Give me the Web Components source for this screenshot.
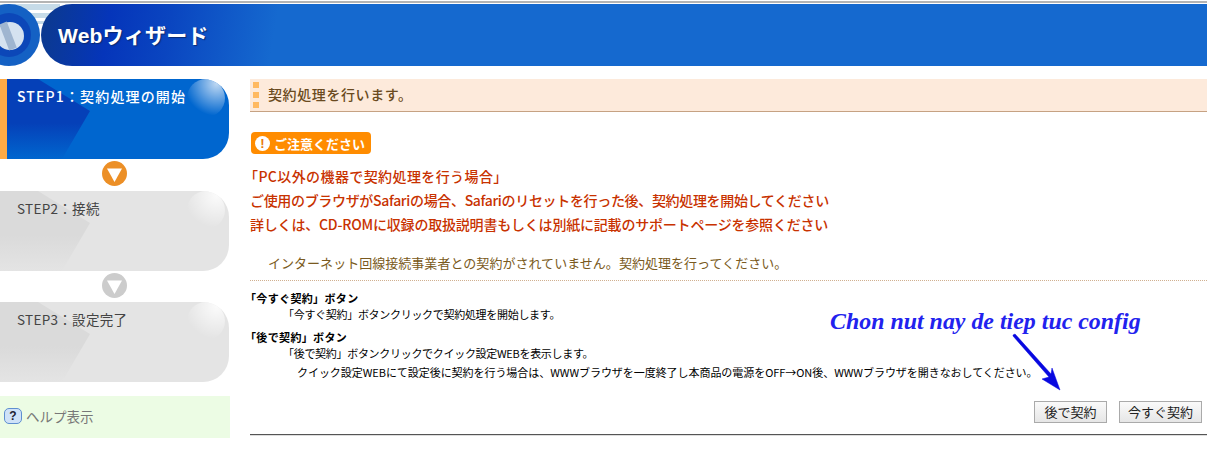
<!DOCTYPE html>
<html lang="ja">
<head>
<meta charset="utf-8">
<title>Webウィザード</title>
<style>
  html, body { margin: 0; padding: 0; background: #fff; }
  body { font-family: "Noto Sans CJK JP", "Liberation Sans", sans-serif; width: 1207px; height: 456px; overflow: hidden; position: relative; }
</style>
</head>
<body>
<wizard-page>
  <wizard-header slot="header">Webウィザード</wizard-header>
  <wizard-step slot="side" state="on">STEP1：契約処理の開始</wizard-step>
  <step-arrow slot="side" color="#ec8f26" size="32"></step-arrow>
  <wizard-step slot="side">STEP2：接続</wizard-step>
  <step-arrow slot="side" color="#cccccc" size="31"></step-arrow>
  <wizard-step slot="side">STEP3：設定完了</wizard-step>
  <help-link slot="side">ヘルプ表示</help-link>

  <title-bar>契約処理を行います。</title-bar>
  <notice-badge>ご注意ください</notice-badge>
  <warn-text>
    <p class="first">「PC以外の機器で契約処理を行う場合」</p>
    <p class="second">ご使用のブラウザがSafariの場合、Safariのリセットを行った後、契約処理を開始してください</p>
    <p class="third">詳しくは、CD-ROMに収録の取扱説明書もしくは別紙に記載のサポートページを参照ください</p>
  </warn-text>
  <status-line>インターネット回線接続事業者との契約がされていません。契約処理を行ってください。</status-line>
  <help-item heading="「今すぐ契約」ボタン" style="margin-top:9px">
    <div>「今すぐ契約」ボタンクリックで契約処理を開始します。</div>
  </help-item>
  <help-item heading="「後で契約」ボタン">
    <div>「後で契約」ボタンクリックでクイック設定WEBを表示します。</div>
    <div class="more">クイック設定WEBにて設定後に契約を行う場合は、WWWブラウザを一度終了し本商品の電源をOFF→ON後、WWWブラウザを開きなおしてください。</div>
  </help-item>
  <button-row>
    <wizard-button width="73">後で契約</wizard-button>
    <wizard-button width="83">今すぐ契約</wizard-button>
  </button-row>
</wizard-page>
<note-overlay>Chon nut nay de tiep tuc config</note-overlay>

<script>
class WizardPage extends HTMLElement {
  constructor() {
    super();
    this.attachShadow({mode: "open"}).innerHTML = `
      <style>
        :host { display: block; }
        .top { box-sizing: border-box; border-top: 2px solid #b4b4b4; margin-top: 1px; height: 3px; }
        .cols { display: flex; padding-top: 13px; }
        .side { width: 230px; flex: none; display: flex; flex-direction: column; }
        .main { margin-left: 20px; flex: 1; min-width: 0; }
      </style>
      <div class="top"></div>
      <slot name="header"></slot>
      <div class="cols">
        <div class="side"><slot name="side"></slot></div>
        <div class="main"><slot></slot></div>
      </div>`;
  }
}

class WizardHeader extends HTMLElement {
  constructor() {
    super();
    this.attachShadow({mode: "open"}).innerHTML = `
      <style>
        :host { display: block; height: 62px; position: relative; background: #fff; overflow: hidden; }
        .bar { position: absolute; left: 41px; right: 0; top: 0; bottom: 0; border-radius: 31px 0 0 31px;
               background: linear-gradient(100deg, #0c3a8c 0, #0535ba 70px, #0a45c0 130px, #1569cf 235px);
               display: flex; align-items: center; padding-left: 17px; box-sizing: border-box;
               color: #fff; font: bold 21px "Liberation Sans", "Noto Sans CJK JP", sans-serif; letter-spacing: .2px; text-shadow: 1px 1px 1px #0a2a70; }
        svg { position: absolute; left: 0; top: 0; }
        span { position: relative; top: -1px; }
      </style>
      <svg width="60" height="62" viewBox="0 0 60 62">
        <rect x="0" y="0" width="60" height="20" fill="#c6dbe8"/>
        <rect x="0" y="6" width="60" height="3" fill="#fff"/>
        <rect x="0" y="14" width="60" height="3" fill="#fff"/>
        <circle cx="9" cy="31" r="31" fill="#1461c4"/>
        <circle cx="9" cy="31" r="22" fill="#0c47b8"/>
        <circle cx="10" cy="32" r="14" fill="#d5e2f0"/>
        <path d="M3 19 L13 45" stroke="#9fb5d0" stroke-width="8" fill="none"/>
      </svg>
      <div class="bar"><span><slot></slot></span></div>`;
  }
}

class WizardStep extends HTMLElement {
  constructor() {
    super();
    const on = this.getAttribute("state") === "on";
    this.attachShadow({mode: "open"}).innerHTML = `
      <style>
        :host { display: block; width: 229px; height: 80px; position: relative; overflow: hidden; box-sizing: border-box;
                border-radius: 0 26px 26px 0; background: ${on ? "#0066cf" : "#e4e4e4"};
                ${on ? "border-left: 7px solid #ffab45;" : ""} color: ${on ? "#fff" : "#444"}; }
        svg { position: absolute; left: 0; top: 0; }
        .t { position: relative; white-space: nowrap; line-height: 20px;
             ${on ? "padding: 7px 0 0 10px; font-size: 14px; letter-spacing: 1.15px; font-weight: 500;"
                  : "padding: 7px 0 0 17px; font-size: 13.5px; letter-spacing: .3px;"} }
      </style>
      <svg width="230" height="80" viewBox="0 0 230 80">
        <defs>
          <linearGradient id="g" x1="0" y1="0" x2="0" y2="1">
            <stop offset="0" stop-color="${on ? "#0540b8" : "#dadada"}"/>
            <stop offset=".55" stop-color="${on ? "#0540b8" : "#dadada"}"/>
            <stop offset="1" stop-color="${on ? "#0066cf" : "#e4e4e4"}"/>
          </linearGradient>
          <radialGradient id="s" cx=".78" cy=".12" r=".85">
            <stop offset="0" stop-color="#fff" stop-opacity="${on ? .75 : .85}"/>
            <stop offset="1" stop-color="#fff" stop-opacity="0"/>
          </radialGradient>
        </defs>
        <path d="M0 0 H${on ? 31 : 38} L${on ? 83 : 90} 32 L${on ? 55 : 62} 80 H0Z" fill="url(#g)"/>
        <circle cx="${on ? 199 : 206}" cy="19" r="19" fill="url(#s)"/>
      </svg>
      <div class="t"><slot></slot></div>`;
  }
}

class StepArrow extends HTMLElement {
  constructor() {
    super();
    const c = this.getAttribute("color");
    this.attachShadow({mode: "open"}).innerHTML = `
      <style>
        :host { display: flex; justify-content: center; height: ${this.getAttribute("size")}px; align-items: center; width: 229px; }
        svg { margin-top: -3px; }
      </style>
      <svg width="25" height="25" viewBox="0 0 25 25">
        <circle cx="12.5" cy="12.5" r="12.5" fill="${c}"/>
        <path d="M5 7.5 H20 L12.5 21Z" fill="#fff"/>
      </svg>`;
  }
}

class HelpLink extends HTMLElement {
  constructor() {
    super();
    this.attachShadow({mode: "open"}).innerHTML = `
      <style>
        :host { display: flex; align-items: center; gap: 4px; height: 42px; box-sizing: border-box; padding: 0 0 3px 4px; margin-top: 14px;
                background: #ecfce4; color: #777; font-size: 13.5px; }
        .q { width: 18px; height: 16px; box-sizing: border-box; border: 1px solid #5f8fd0; border-radius: 5px; background: #cfe2f8;
             color: #223; font: bold 12px/14px "Liberation Sans", sans-serif; text-align: center; }
      </style>
      <span class="q">?</span><slot></slot>`;
  }
}

class TitleBar extends HTMLElement {
  constructor() {
    super();
    this.attachShadow({mode: "open"}).innerHTML = `
      <style>
        :host { display: flex; align-items: center; height: 33px; box-sizing: border-box; padding: 0 0 2px 18px; background: #fdeadb; border-bottom: 1px solid #c6a283;
                color: #6a4a20; font-size: 14px; font-weight: 500; letter-spacing: .6px; position: relative; }
        i { position: absolute; left: 3px; top: 3px; bottom: 0; width: 6px;
            background: repeating-linear-gradient(#ffb960 0 6px, transparent 6px 10px); }
      </style>
      <i></i><slot></slot>`;
  }
}

class NoticeBadge extends HTMLElement {
  constructor() {
    super();
    this.attachShadow({mode: "open"}).innerHTML = `
      <style>
        :host { display: flex; align-items: center; gap: 4px; width: 120px; height: 22px; box-sizing: border-box; margin: 20px 0 0 1px; padding-left: 4px;
                background: #ff8c00; border-radius: 4px; color: #fff; font-size: 13px; font-weight: bold; white-space: nowrap; }
        b { width: 15px; height: 15px; border-radius: 50%; background: #fff; color: #e8790a; font: bold 13px/15px "Liberation Sans", sans-serif; text-align: center; flex: none; }
      </style>
      <b>!</b><slot></slot>`;
  }
}

class WarnText extends HTMLElement {
  constructor() {
    super();
    this.attachShadow({mode: "open"}).innerHTML = `
      <style>
        :host { display: block; margin-top: 10px; color: #c83200; font-size: 14px; font-weight: 500; line-height: 24px; white-space: nowrap; }
        ::slotted(p) { margin: 0; }
        ::slotted(.first) { margin-left: -6px; letter-spacing: .4px; }
        ::slotted(.second) { letter-spacing: -.33px; }
        ::slotted(.third) { letter-spacing: -.2px; }
      </style>
      <slot></slot>`;
  }
}

class StatusLine extends HTMLElement {
  constructor() {
    super();
    this.attachShadow({mode: "open"}).innerHTML = `
      <style>
        :host { display: block; margin-top: 6px; height: 39px; box-sizing: border-box; padding: 11px 0 0 18px; border-bottom: 1px dotted #d0b090;
                color: #7a5a20; font-size: 13px; letter-spacing: .03px; line-height: 19px; white-space: nowrap; }
      </style>
      <slot></slot>`;
  }
}

class HelpItem extends HTMLElement {
  constructor() {
    super();
    this.attachShadow({mode: "open"}).innerHTML = `
      <style>
        :host { display: block; font-size: 11px; line-height: 16px; color: #000; white-space: nowrap; margin-top: 7px; }
        .h { font-weight: bold; margin-left: -5px; letter-spacing: .35px; }
        .b { padding-left: 33px; letter-spacing: -.3px; }
        ::slotted(.more) { padding: 3px 0 0 14px; letter-spacing: -.05px; }
      </style>
      <div class="h">${this.getAttribute("heading")}</div>
      <div class="b"><slot></slot></div>`;
  }
}

class ButtonRow extends HTMLElement {
  constructor() {
    super();
    this.attachShadow({mode: "open"}).innerHTML = `
      <style>
        :host { display: flex; justify-content: flex-end; gap: 12px; margin-top: 18px; padding: 0 5px 11px 0; border-bottom: 1px solid #555; box-shadow: 0 1px #ddd; }
      </style>
      <slot></slot>`;
  }
}

class WizardButton extends HTMLElement {
  constructor() {
    super();
    this.attachShadow({mode: "open"}).innerHTML = `
      <style>
        :host { display: block; }
        button { width: ${this.getAttribute("width")}px; height: 22px; padding: 0; box-sizing: border-box; border: 1px solid #aaa; background: linear-gradient(#fafafa, #e6e6e6);
                 color: #222; font: 13px "Noto Sans CJK JP", sans-serif; white-space: nowrap; }
      </style>
      <button><slot></slot></button>`;
  }
}

class NoteOverlay extends HTMLElement {
  constructor() {
    super();
    this.attachShadow({mode: "open"}).innerHTML = `
      <style>
        :host { display: block; position: absolute; left: 830px; top: 308px; width: 320px; height: 85px; }
        .t { color: #2222ee; font: italic bold 23.9px/26px "Liberation Serif", serif; white-space: nowrap; }
        svg { position: absolute; left: 170px; top: 24px; }
      </style>
      <div class="t"><slot></slot></div>
      <svg width="70" height="64" viewBox="0 0 70 64">
        <path d="M13 3 L15 2 L51 42 L52 36 L60 58 L42 47 L49 45 L13 4Z" fill="#0808e0" stroke="#0808e0" stroke-width=".5"/>
      </svg>`;
  }
}

customElements.define("wizard-page", WizardPage);
customElements.define("wizard-header", WizardHeader);
customElements.define("wizard-step", WizardStep);
customElements.define("step-arrow", StepArrow);
customElements.define("help-link", HelpLink);
customElements.define("title-bar", TitleBar);
customElements.define("notice-badge", NoticeBadge);
customElements.define("warn-text", WarnText);
customElements.define("status-line", StatusLine);
customElements.define("help-item", HelpItem);
customElements.define("button-row", ButtonRow);
customElements.define("wizard-button", WizardButton);
customElements.define("note-overlay", NoteOverlay);
</script>
</body>
</html>
